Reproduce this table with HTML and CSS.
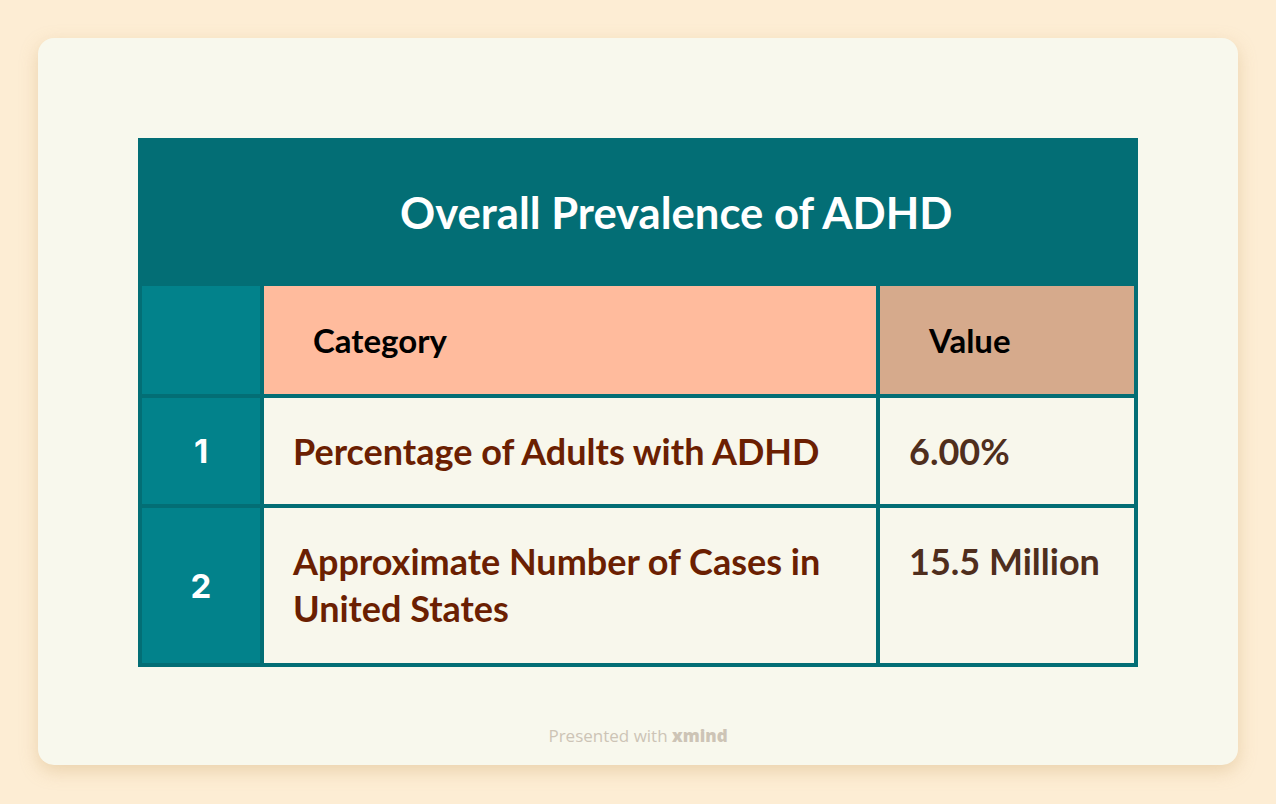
FILE: index.html
```html
<!DOCTYPE html>
<html>
<head>
<meta charset="utf-8">
<link rel="stylesheet" href="styles.css">
</head>
<body>
<div class="card">
  <table class="tbl">
    <colgroup>
      <col class="c-idx">
      <col class="c-cat">
      <col class="c-val">
    </colgroup>
    <tr>
      <th class="title" colspan="3">Overall Prevalence of ADHD</th>
    </tr>
    <tr class="head">
      <td class="idx"></td>
      <td class="h-cat">Category</td>
      <td class="h-val">Value</td>
    </tr>
    <tr class="row">
      <td class="idx">1</td>
      <td class="cat">Percentage of Adults with ADHD</td>
      <td class="val">6.00%</td>
    </tr>
    <tr class="row row-tall">
      <td class="idx">2</td>
      <td class="cat">Approximate Number of Cases in United States</td>
      <td class="val">15.5 Million</td>
    </tr>
  </table>
  <div class="footer">Presented with <b>xmind</b></div>
</div>
</body>
</html>
```
FILE: styles.css
```css
html, body {
  margin: 0;
  padding: 0;
}
body {
  background: #fdedd4;
  width: 1276px;
  height: 804px;
  padding-top: 38px;
  box-sizing: border-box;
  font-family: Lato, "Open Sans", sans-serif;
}
.card {
  margin: 0 38px;
  width: 1200px;
  height: 727px;
  box-sizing: border-box;
  background: #f8f8ed;
  border-radius: 16px;
  box-shadow: 0 6px 18px rgba(200, 160, 100, 0.35);
  padding: 100px 100px 0;
  display: flex;
  flex-direction: column;
  align-items: center;
}
.tbl {
  width: 1000px;
  border-collapse: separate;
  border-spacing: 4px;
  background: #036e75;
  table-layout: fixed;
}
.c-idx { width: 118px; }
.c-cat { width: 612px; }
.c-val { width: 254px; }
.tbl td, .tbl th {
  padding: 0;
}
.title {
  height: 140px;
  color: #ffffff;
  font-size: 43.6px;
  font-weight: 700;
  text-align: left;
  padding-left: 258px !important;
  box-sizing: border-box;
}
.idx {
  background: #02828b;
  color: #ffffff;
  text-align: center;
  font-family: Inter, sans-serif;
  font-weight: 700;
  font-size: 33px;
}
.h-cat, .h-val {
  height: 108px;
  font-weight: 700;
  font-size: 33px;
  color: #000000;
  padding-left: 49px !important;
}
.h-cat {
  background: #ffbb9d;
}
.h-val {
  background: #d6aa8c;
}
.row td.cat, .row td.val {
  background: #f8f7ec;
  vertical-align: top;
  padding: 30px 10px 29px 29px;
  line-height: 47px;
  font-weight: 700;
  font-size: 36px;
}
.row-tall td.cat, .row-tall td.val {
  padding-bottom: 31px;
}
.cat {
  color: #6b1f02;
}
.val {
  color: #4f2e1d;
}
.footer {
  margin-top: 57px;
  font-family: "Open Sans", sans-serif;
  font-size: 17px;
  color: #cdc4b6;
}
.footer b {
  font-weight: 800;
}
```
